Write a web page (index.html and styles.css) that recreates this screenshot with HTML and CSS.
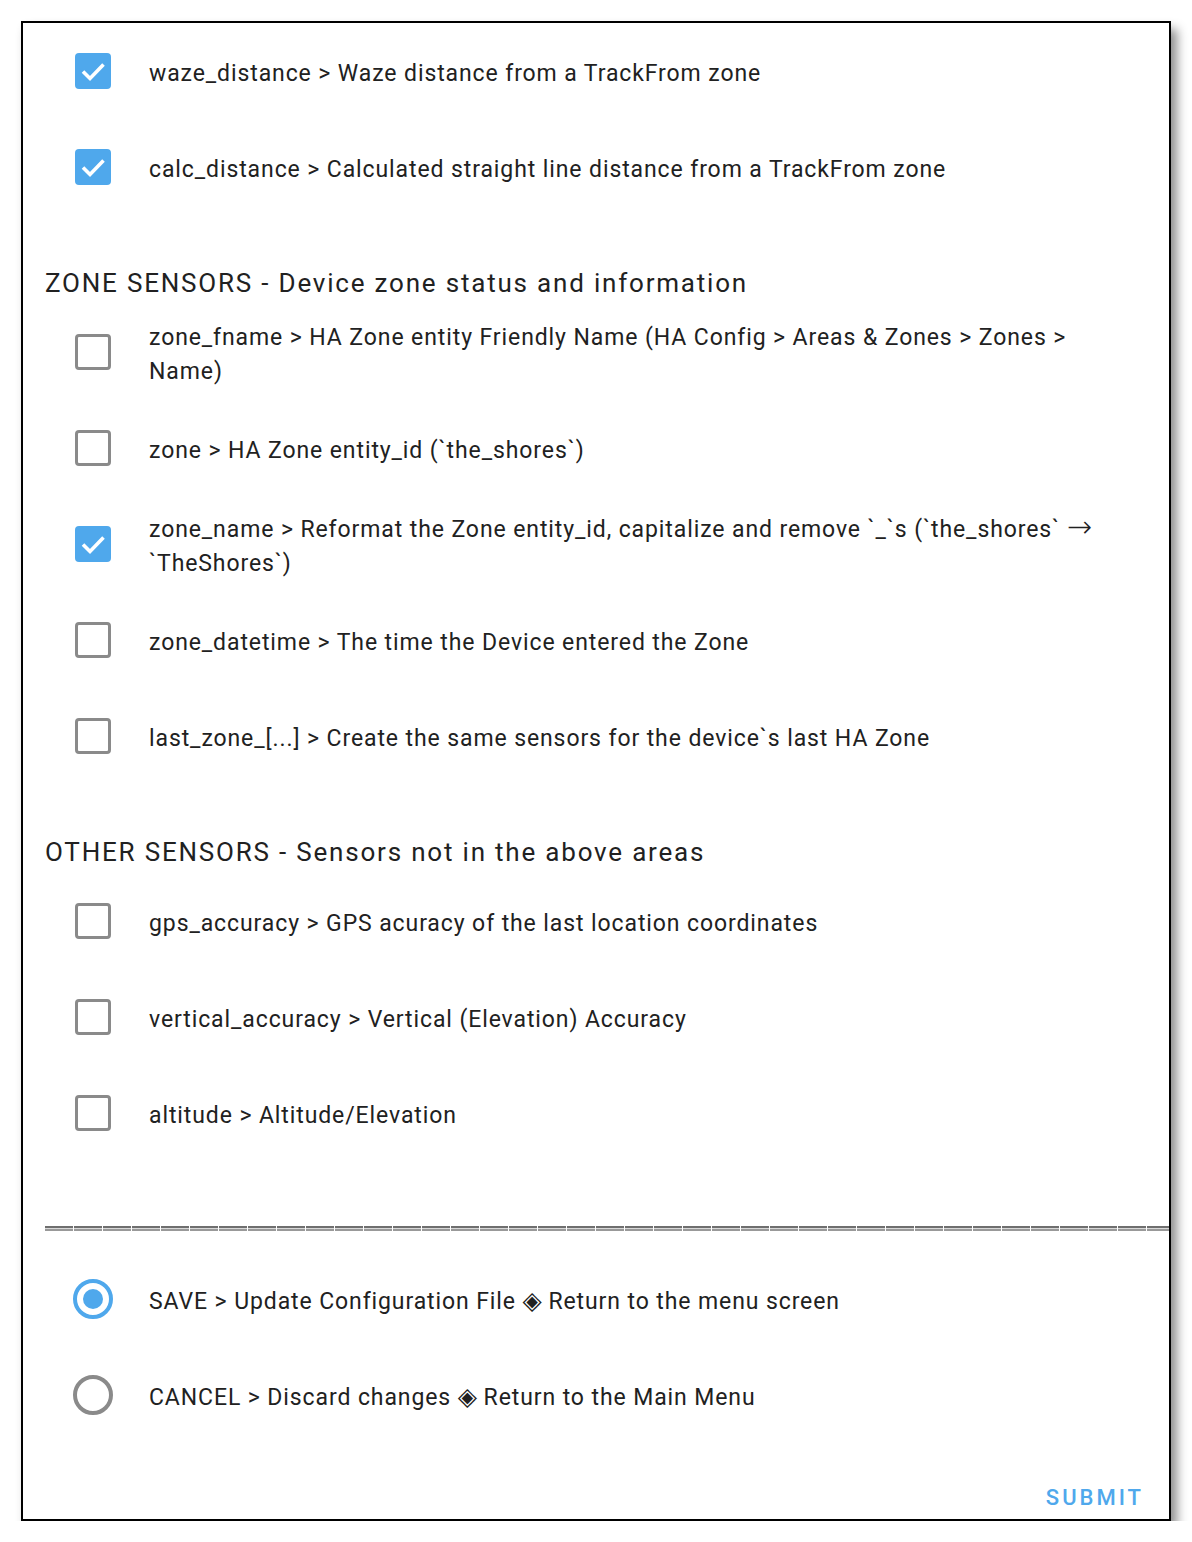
FILE: index.html
```
<!DOCTYPE html>
<html>
<head>
<meta charset="utf-8">
<link rel="stylesheet" href="styles.css">
</head>
<body>
<div class="frame">
  <div class="row">
    <span class="cb checked"><svg viewBox="0 0 36 36"><polyline points="8,18.5 15,25.5 28.5,11.5"/></svg></span>
    <span class="label">waze_distance &gt; Waze distance from a TrackFrom zone</span>
  </div>
  <div class="row">
    <span class="cb checked"><svg viewBox="0 0 36 36"><polyline points="8,18.5 15,25.5 28.5,11.5"/></svg></span>
    <span class="label">calc_distance &gt; Calculated straight line distance from a TrackFrom zone</span>
  </div>

  <h2 class="section">ZONE SENSORS - Device zone status and information</h2>
  <div class="row">
    <span class="cb"></span>
    <span class="label">zone_fname &gt; HA Zone entity Friendly Name (HA Config &gt; Areas &amp; Zones &gt; Zones &gt; Name)</span>
  </div>
  <div class="row">
    <span class="cb"></span>
    <span class="label">zone &gt; HA Zone entity_id (`the_shores`)</span>
  </div>
  <div class="row">
    <span class="cb checked"><svg viewBox="0 0 36 36"><polyline points="8,18.5 15,25.5 28.5,11.5"/></svg></span>
    <span class="label">zone_name &gt; Reformat the Zone entity_id, capitalize and remove `_`s (`the_shores` <span class="arrow">→</span> `TheShores`)</span>
  </div>
  <div class="row">
    <span class="cb"></span>
    <span class="label">zone_datetime &gt; The time the Device entered the Zone</span>
  </div>
  <div class="row">
    <span class="cb"></span>
    <span class="label">last_zone_[...] &gt; Create the same sensors for the device`s last HA Zone</span>
  </div>

  <h2 class="section">OTHER SENSORS - Sensors not in the above areas</h2>
  <div class="row">
    <span class="cb"></span>
    <span class="label">gps_accuracy &gt; GPS acuracy of the last location coordinates</span>
  </div>
  <div class="row">
    <span class="cb"></span>
    <span class="label">vertical_accuracy &gt; Vertical (Elevation) Accuracy</span>
  </div>
  <div class="row">
    <span class="cb"></span>
    <span class="label">altitude &gt; Altitude/Elevation</span>
  </div>

  <div class="separator"></div>

  <div class="row">
    <span class="radio on"></span>
    <span class="label">SAVE &gt; Update Configuration File <span class="diamond">◈</span> Return to the menu screen</span>
  </div>
  <div class="row">
    <span class="radio"></span>
    <span class="label">CANCEL &gt; Discard changes <span class="diamond">◈</span> Return to the Main Menu</span>
  </div>

  <div class="actions">
    <span class="submit">SUBMIT</span>
  </div>
</div>
</body>
</html>
```
FILE: styles.css
```
html, body {
  margin: 0;
  padding: 0;
  background: #ffffff;
}

body {
  font-family: Roboto, "Liberation Sans", sans-serif;
  color: #212121;
}

.frame {
  box-sizing: border-box;
  width: 1150px;
  height: 1500px;
  margin: 21px 0 0 21px;
  border: 2px solid #000;
  background: #fff;
  overflow: hidden;
  box-shadow: 6px 8px 10px rgba(0, 0, 0, 0.45);
  padding-right: 55px;
  display: flex;
  flex-direction: column;
}

.row {
  display: flex;
  align-items: center;
  height: 96px;
  padding-left: 52px;
}

.cb {
  flex: none;
  box-sizing: border-box;
  width: 36px;
  height: 36px;
  border: 3.5px solid #8a8a8a;
  border-radius: 4px;
  display: flex;
}

.cb.checked {
  border: none;
  background: #4fa8ec;
}

.cb svg {
  width: 36px;
  height: 36px;
}

.cb polyline {
  fill: none;
  stroke: #fff;
  stroke-width: 3.6;
}

.radio {
  flex: none;
  box-sizing: border-box;
  width: 40px;
  height: 40px;
  margin-left: -2px;
  margin-right: -2px;
  border: 4px solid #8a8a8a;
  border-radius: 50%;
  display: flex;
  align-items: center;
  justify-content: center;
}

.radio.on {
  border-color: #4fa8ec;
}

.radio.on::after {
  content: "";
  width: 20px;
  height: 20px;
  border-radius: 50%;
  background: #4fa8ec;
}

.label {
  margin-left: 38px;
  padding-top: 5px;
  font-size: 23px;
  line-height: 34px;
  letter-spacing: 0.9px;
}

.arrow {
  font-family: "DejaVu Sans", sans-serif;
  font-size: 30px;
  font-weight: 200;
  line-height: 0;
  letter-spacing: 0;
}

.diamond {
  font-family: "DejaVu Sans", sans-serif;
  font-size: 25px;
  line-height: 0;
  letter-spacing: 0;
}

.section {
  margin: 50px 0 3px 22px;
  font-size: 26px;
  line-height: 36px;
  font-weight: 400;
  letter-spacing: 1.8px;
}

.separator {
  flex: none;
  margin: 65px -55px 20px 22px;
  height: 5px;
  background:
    repeating-linear-gradient(90deg, transparent 0, transparent 28px, #fff 28px, #fff 29px),
    linear-gradient(#6f6f6f 0, #6f6f6f 2px, #d8d8d8 2px, #d8d8d8 3px, #999 3px, #999 5px);
}

.actions {
  display: flex;
  justify-content: flex-end;
  margin-right: -30px;
  padding-top: 41px;
}

.submit {
  font-size: 22px;
  font-weight: 500;
  letter-spacing: 3px;
  color: #4fa8ec;
  line-height: 28px;
}
```
